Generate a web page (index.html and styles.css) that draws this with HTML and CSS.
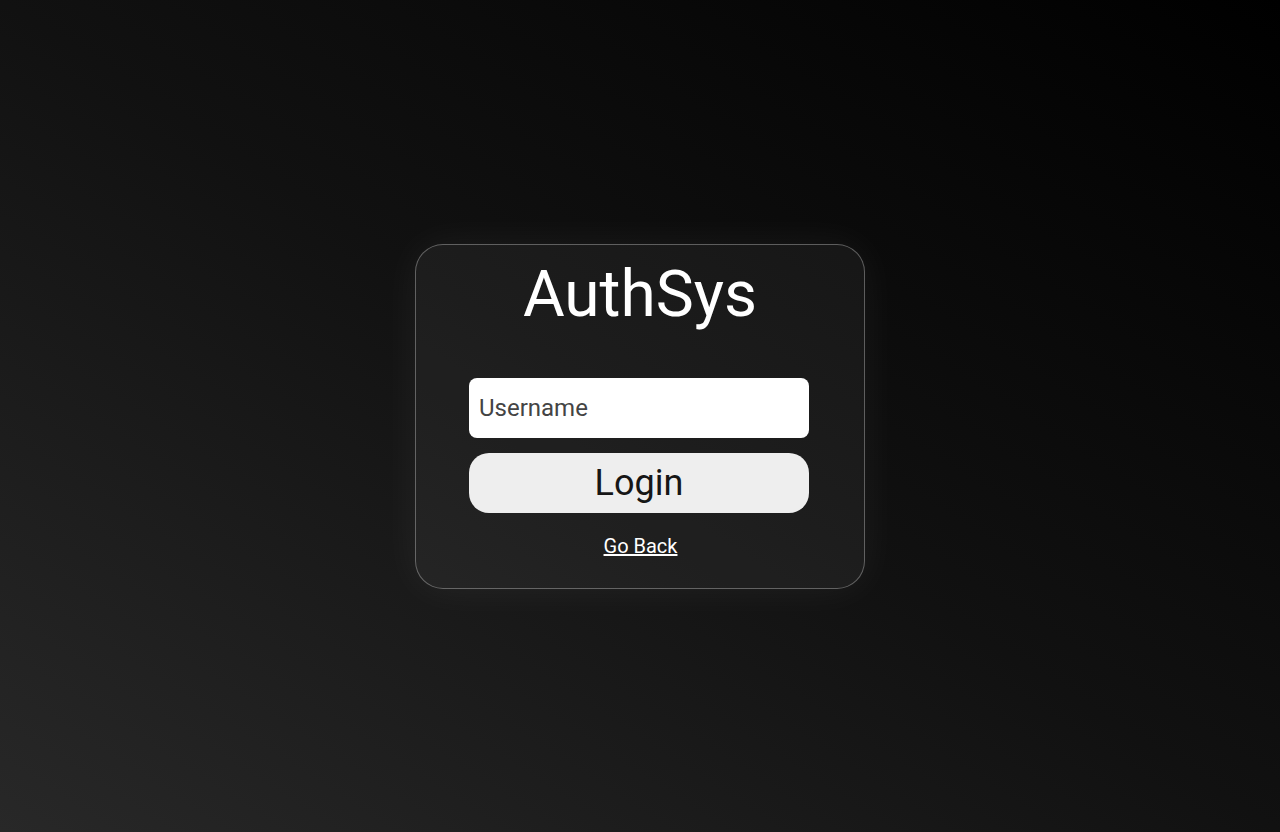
FILE: index.html
```html
<!DOCTYPE html>
<html lang="en">
<head>
<meta charset="utf-8">
<title>AuthSys</title>
<link rel="stylesheet" href="styles.css">
</head>
<body>
<main class="card">
  <h1 class="title">AuthSys</h1>
  <input class="field" type="text" placeholder="Username">
  <button class="btn" type="button">Login</button>
  <a class="back" href="#">Go Back</a>
</main>
</body>
</html>
```
FILE: styles.css
```css
html, body {
  margin: 0;
  height: 100%;
}
body {
  font-family: Roboto, "Liberation Sans", sans-serif;
  background: linear-gradient(to top right, #282828 0%, #111 50%, #000 100%);
  display: flex;
  align-items: center;
  justify-content: center;
}
.card {
  box-sizing: border-box;
  width: 450px;
  padding: 12px 54px 30px;
  border: 1px solid rgba(255, 255, 255, 0.3);
  border-radius: 28px;
  background: rgba(255, 255, 255, 0.05);
  box-shadow: 0 0 40px rgba(255, 255, 255, 0.06);
  display: flex;
  flex-direction: column;
  align-items: stretch;
  text-align: center;
}
.title {
  margin: 0 0 46px;
  font-size: 64px;
  font-weight: 400;
  color: #fff;
  line-height: normal;
}
.field {
  box-sizing: border-box;
  height: 60px;
  margin: 0 1px 15px -1px;
  padding: 0 10px;
  border: none;
  border-radius: 8px;
  background: #fff;
  font-family: inherit;
  font-size: 24px;
  color: #222;
  outline: none;
}
.field::placeholder {
  color: #444;
  opacity: 1;
}
.btn {
  height: 60px;
  margin: 0 1px 21px -1px;
  border: none;
  border-radius: 20px;
  background: #eee;
  font-family: inherit;
  font-size: 36px;
  color: #161616;
  padding: 0;
}
.back {
  align-self: center;
  margin-left: 1px;
  font-size: 20px;
  color: #fff;
  text-decoration: underline;
  line-height: normal;
}
```
